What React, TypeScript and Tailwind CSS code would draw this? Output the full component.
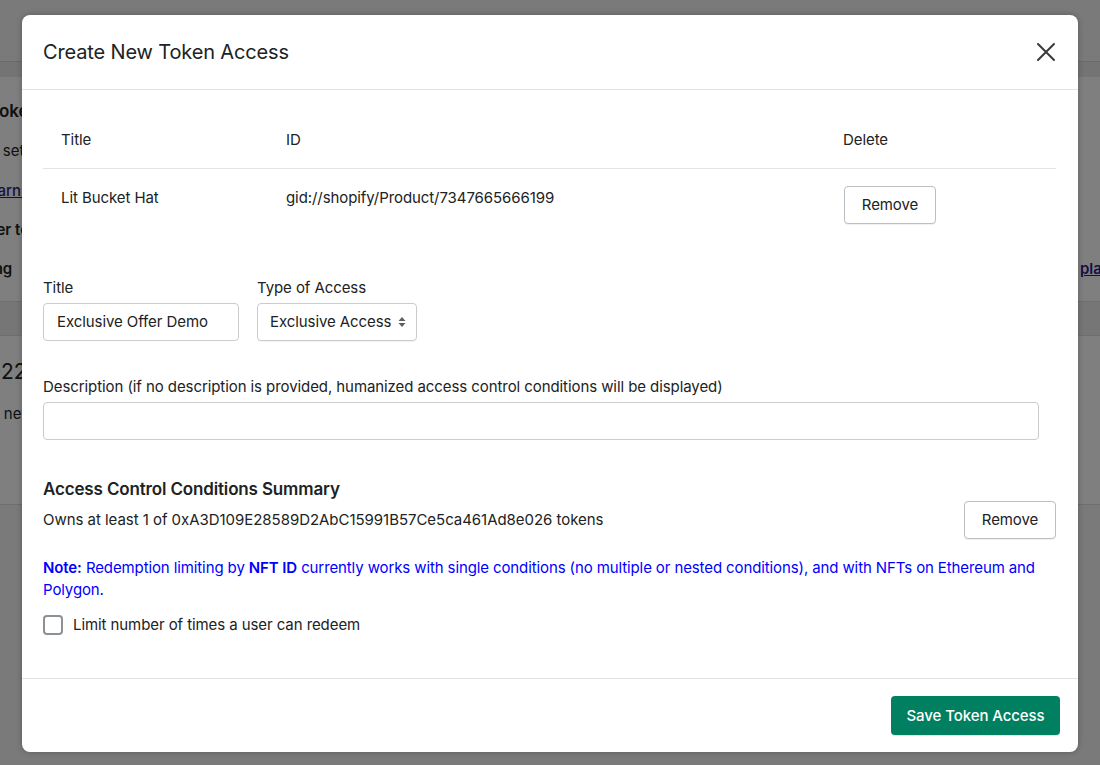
import React from "react";

const font = { fontFamily: "Inter, 'Noto Sans', sans-serif" };

function Background() {
  return (
    <div className="w-[1100px] h-[765px] bg-[#f4f4f4] overflow-hidden text-[#202223]" style={font}>
      <div className="h-[61px] bg-[#f4f4f4]" />
      <div className="h-[16px] bg-[#e8e8e8] border-t border-[#d6d6d6]" />
      <div className="h-[225px] bg-white border-b border-[#dedede] flex justify-between">
        <div className="flex flex-col text-[15px] leading-[22px] whitespace-nowrap">
          <div className="-ml-[11px] mt-[23px] font-semibold text-[17px]">Token gating</div>
          <div className="-ml-[19px] mt-[18px]">To set up token gates</div>
          <div className="-ml-[20px] mt-[18px] text-[#2c1c8c] underline font-medium">Learn more</div>
          <div className="-ml-[27px] mt-[17px] font-semibold">Enter token</div>
          <div className="-ml-[39px] mt-[17px] font-semibold">Setting</div>
        </div>
        <div className="flex flex-col text-[15px] leading-[22px] w-[20px] overflow-hidden">
          <div className="mt-[181px] text-[#2c1c8c] underline font-semibold whitespace-nowrap">play</div>
        </div>
      </div>
      <div className="h-[33px] bg-[#ececec]" />
      <div className="h-[170px] bg-white border-t border-b border-[#dedede] text-[15px] whitespace-nowrap">
        <div className="-ml-[25px] mt-[22px] text-[21px] leading-[28px]">2022</div>
        <div className="-ml-[18px] mt-[17px] leading-[22px]">All new</div>
      </div>
      <div className="h-[260px] bg-[#f4f4f4]" />
    </div>
  );
}

function SelectArrows() {
  return (
    <svg width="10" height="14" viewBox="0 0 10 14" className="ml-[6px]">
      <path d="M5 2 L8.5 6 H1.5 Z" fill="#5c5f62" />
      <path d="M5 12 L8.5 8 H1.5 Z" fill="#5c5f62" />
    </svg>
  );
}

function Modal() {
  return (
    <div className="absolute left-[22px] top-[15px] w-[1056px] bg-white rounded-[8px] shadow-[0_0_6px_rgba(0,0,0,0.25)] text-[#202223] text-[15px] leading-[22px] tracking-[-0.08px] flex flex-col" style={font}>
      <div className="h-[75px] border-b border-[#e1e3e5] flex items-center justify-between pl-[21px] pr-[22px]">
        <div className="text-[20px] leading-[28px] tracking-[-0.15px]">Create New Token Access</div>
        <svg width="20" height="20" viewBox="0 0 20 20">
          <path d="M2 2 L18 18 M18 2 L2 18" stroke="#3a3a3a" strokeWidth="2" strokeLinecap="round" />
        </svg>
      </div>

      <div className="pt-[21px] pl-[21px] pr-[22px] pb-[42px] flex flex-col">
        <table className="w-[1013px] border-collapse">
          <thead>
            <tr className="border-b border-[#e1e3e5]">
              <th className="w-[225px] text-left font-normal pl-[18px] pt-[18px] pb-[17px]">Title</th>
              <th className="w-[557px] text-left font-normal pl-[18px] pt-[18px] pb-[17px]">ID</th>
              <th className="text-left font-normal pl-[18px] pt-[18px] pb-[17px]">Delete</th>
            </tr>
          </thead>
          <tbody>
            <tr>
              <td className="align-top pl-[18px] pt-[18px] pb-[17px]">Lit Bucket Hat</td>
              <td className="align-top pl-[18px] pt-[18px] pb-[17px]">gid://shopify/Product/7347665666199</td>
              <td className="align-top pl-[19px] pt-[17px] pb-[17px]">
                <button className="h-[38px] w-[92px] border border-[#babfc3] rounded-[4px] bg-white shadow-[0_1px_0_rgba(0,0,0,0.05)] text-[15px]">Remove</button>
              </td>
            </tr>
          </tbody>
        </table>

        <div className="mt-[36px] flex gap-[18px]">
          <div className="flex flex-col">
            <label className="mb-[4px]">Title</label>
            <div className="h-[38px] w-[196px] border border-[#c9cccf] rounded-[4px] flex items-center pl-[13px]">Exclusive Offer Demo</div>
          </div>
          <div className="flex flex-col">
            <label className="mb-[4px]">Type of Access</label>
            <div className="h-[38px] w-[160px] border border-[#c9cccf] rounded-[4px] flex items-center pl-[12px] shadow-[0_1px_0_rgba(0,0,0,0.05)]">
              Exclusive Access
              <SelectArrows />
            </div>
          </div>
        </div>

        <label className="mt-[35px] mb-[4px]">Description (if no description is provided, humanized access control conditions will be displayed)</label>
        <div className="h-[38px] w-[996px] border border-[#c9cccf] rounded-[4px]" />

        <div className="mt-[37px] text-[17px] leading-[24px] font-semibold tracking-[-0.15px]">Access Control Conditions Summary</div>
        <div className="flex items-center justify-between h-[38px]">
          <div className="tracking-[-0.04px]">Owns at least 1 of 0xA3D109E28589D2AbC15991B57Ce5ca461Ad8e026 tokens</div>
          <button className="h-[38px] w-[92px] border border-[#babfc3] rounded-[4px] bg-white shadow-[0_1px_0_rgba(0,0,0,0.05)] text-[15px]">Remove</button>
        </div>

        <p className="mt-[18px] text-[#0000ff] pr-[10px] tracking-[-0.11px]">
          <span className="font-semibold">Note:</span> Redemption limiting by <span className="font-semibold">NFT ID</span> currently works with single conditions (no multiple or nested conditions), and with NFTs on Ethereum and Polygon.
        </p>

        <div className="mt-[13px] flex items-center">
          <div className="w-[20px] h-[20px] border-2 border-[#8c9196] rounded-[4px]" />
          <span className="ml-[10px]">Limit number of times a user can redeem</span>
        </div>
      </div>

      <div className="border-t border-[#e1e3e5] h-[74px] flex items-center justify-end pr-[18px]">
        <button className="h-[39px] w-[169px] rounded-[4px] bg-[#008060] text-white font-medium text-[15px] shadow-[0_1px_0_rgba(0,0,0,0.1)]">Save Token Access</button>
      </div>
    </div>
  );
}

export default function App() {
  return (
    <div className="relative w-[1100px] h-[765px] overflow-hidden">
      <Background />
      <div className="absolute inset-0 bg-black/50" />
      <Modal />
    </div>
  );
}
